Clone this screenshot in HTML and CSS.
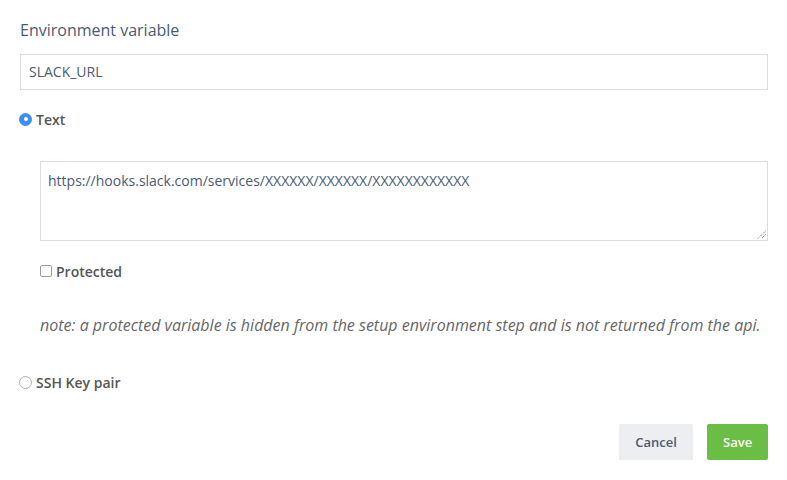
FILE: index.html
```html
<!DOCTYPE html>
<html>
<head>
<meta charset="utf-8">
<link rel="stylesheet" href="styles.css">
</head>
<body>
<form class="form">
  <label class="field-label">Environment variable</label>
  <div class="input">SLACK_URL</div>
  <div class="choice choice-text">
    <span class="radio checked"></span>
    <span class="choice-label">Text</span>
  </div>
  <div class="text-section">
    <div class="textarea">https://hooks.slack.com/services/XXXXXX/XXXXXX/XXXXXXXXXXXX
      <svg class="grip" width="9" height="9" viewBox="0 0 9 9"><path d="M8.5 1 L1 8.5 M8.5 4.5 L4.5 8.5" stroke="#555" stroke-width="1" stroke-dasharray="1 1" fill="none"/></svg>
    </div>
    <div class="check-row">
      <span class="checkbox"></span>
      <span class="choice-label">Protected</span>
    </div>
    <p class="note">note: a protected variable is hidden from the setup environment step and is not returned from the api.</p>
  </div>
  <div class="choice choice-ssh">
    <span class="radio"></span>
    <span class="choice-label">SSH Key pair</span>
  </div>
  <div class="actions">
    <button type="button" class="btn btn-cancel">Cancel</button>
    <button type="button" class="btn btn-save">Save</button>
  </div>
</form>
</body>
</html>
```
FILE: styles.css
```css
* { box-sizing: border-box; }
html, body { margin: 0; padding: 0; background: #fff; }
body { font-family: "Open Sans", "Noto Sans", sans-serif; }
.form {
  padding: 19px 19px 0 20px;
  display: flex;
  flex-direction: column;
}
.field-label {
  font-size: 16px;
  line-height: 22px;
  color: #4b5a72;
  display: block;
}
.input {
  margin-top: 13px;
  height: 36px;
  border: 1px solid #dcdcdc;
  padding: 0 8px;
  font-size: 14px;
  line-height: 34px;
  color: #4b5a72;
}
.choice {
  display: flex;
  align-items: center;
  gap: 4px;
  height: 20px;
}
.choice-text { margin-top: 19px; margin-left: -1px; }
.choice-label {
  font-size: 14px;
  font-weight: 600;
  color: #555;
}
.radio {
  width: 13px;
  height: 13px;
  border-radius: 50%;
  border: 1px solid #b5b5b5;
  background: #fff;
  display: inline-block;
  position: relative;
}
.radio.checked {
  background: #3a8fef;
  border-color: #3a8fef;
}
.radio.checked::after {
  content: "";
  position: absolute;
  width: 4px; height: 4px;
  border-radius: 50%;
  background: #fff;
  left: 3.5px; top: 3.5px;
}
.text-section {
  margin-left: 20px;
  margin-top: 32px;
}
.textarea {
  position: relative;
  height: 80px;
  border: 1px solid #dcdcdc;
  padding: 9px 7px;
  font-size: 14px;
  line-height: 20px;
  color: #4b5a72;
}
.grip { position: absolute; right: 1px; bottom: 1px; }
.check-row {
  margin-top: 20px;
  display: flex;
  align-items: center;
  gap: 4px;
  height: 20px;
}
.checkbox {
  width: 12px; height: 12px;
  border: 1px solid #9c9c9c;
  border-radius: 2px;
  background: #fff;
  display: inline-block;
}
.note {
  margin: 33px 0 0 0;
  font-size: 16px;
  font-style: italic;
  line-height: 22px;
  color: #666;
}
.choice-ssh { margin-top: 36px; margin-left: -1px; }
.actions {
  margin-top: 32px;
  display: flex;
  justify-content: flex-end;
  gap: 14px;
}
.btn {
  font-family: "Open Sans", "Noto Sans", sans-serif;
  font-size: 13px;
  font-weight: 600;
  height: 36px;
  border: none;
  border-radius: 2px;
  padding: 0 16px;
  cursor: pointer;
}
.btn-cancel {
  background: #eceef1;
  color: #4b5a72;
  box-shadow: 0 1px 0 #dfe2e6;
  width: 74px;
}
.btn-save {
  background: #6abe45;
  color: #fff;
  width: 61px;
}
```
